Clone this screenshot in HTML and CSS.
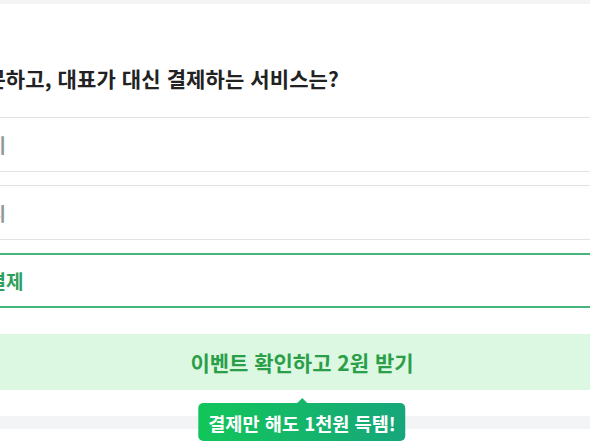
FILE: index.html
```html
<!DOCTYPE html>
<html lang="ko">
<head>
<meta charset="utf-8">
<link rel="stylesheet" href="styles.css">
</head>
<body>
<div class="topband"></div>
<main class="quiz">
  <h1 class="question">주문하고, 대표가 대신 결제하는 서비스는?</h1>
  <ul class="options">
    <li class="option">페이</li>
    <li class="option">캐시</li>
    <li class="option selected">선결제</li>
  </ul>
  <button class="cta">이벤트 확인하고 2원 받기</button>
  <div class="bottom">
    <div class="band"></div>
    <div class="tip">결제만 해도 1천원 득템!</div>
  </div>
</main>
</body>
</html>
```

FILE: styles.css
```css
* { box-sizing: border-box; }
html, body {
  margin: 0;
  padding: 0;
  background: #ffffff;
  overflow: hidden;
  font-family: "Noto Sans CJK KR", "Noto Sans", sans-serif;
}
.topband {
  height: 4px;
  background: #f4f4f4;
}
.quiz {
  width: 700px;
  margin-left: -48px;
  padding-top: 60px;
}
.question {
  margin: 0;
  padding-left: 15px;
  font-size: 21px;
  line-height: 28px;
  font-weight: 700;
  color: #222222;
  letter-spacing: 0.1px;
}
.options {
  list-style: none;
  margin: 25px 0 0;
  padding: 0;
  display: flex;
  flex-direction: column;
  gap: 13px;
}
.option {
  height: 55px;
  border: 1px solid #e2e2e2;
  display: flex;
  align-items: center;
  padding-left: 18px;
  font-size: 19px;
  font-weight: 700;
  color: #8f999b;
}
.option.selected {
  border: 2px solid #45b57c;
  padding-left: 17px;
  color: #2e9e5e;
}
.cta {
  display: block;
  width: 100%;
  height: 56px;
  margin-top: 26px;
  border: 0;
  background: #dcf8e3;
  color: #2b9f48;
  font-family: inherit;
  font-size: 21px;
  font-weight: 700;
  text-align: center;
  padding: 0;
}
.bottom {
  position: relative;
  height: 52px;
  padding-top: 26px;
}
.band {
  height: 13px;
  background: #f3f4f6;
}
.tip {
  position: absolute;
  left: 50%;
  top: 13px;
  transform: translateX(-50%);
  height: 38px;
  padding: 0 10px;
  display: flex;
  align-items: center;
  border-radius: 5px;
  background: linear-gradient(90deg, #12c65a, #17a67b);
  color: #ffffff;
  font-size: 18.6px;
  font-weight: 700;
  white-space: nowrap;
}
.tip::before {
  content: "";
  position: absolute;
  left: 50%;
  top: -5px;
  margin-left: -5px;
  border-left: 5px solid transparent;
  border-right: 5px solid transparent;
  border-bottom: 5px solid #15b866;
}
```
